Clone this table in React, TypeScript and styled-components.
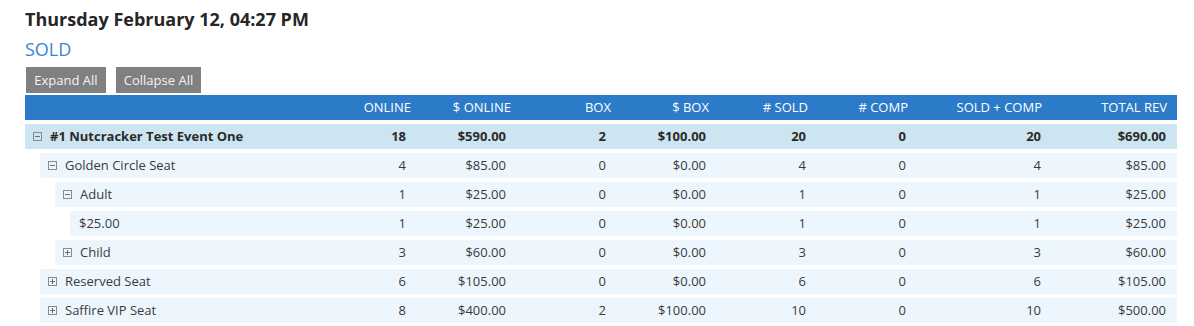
import React from "react";
import styled, { createGlobalStyle } from "styled-components";

const GlobalStyle = createGlobalStyle`
  html, body { margin: 0; padding: 0; background: #ffffff; }
  body { font-family: "Open Sans", "Liberation Sans", sans-serif; color: #333333; }
`;

const Page = styled.div`
  width: 1152px;
  padding: 7px 0 0 25px;
`;

const Title = styled.h2`
  margin: 0;
  font-size: 18px;
  line-height: 24px;
  font-weight: 700;
  color: #262626;
`;

const SectionLabel = styled.div`
  margin-top: 6px;
  font-size: 18px;
  line-height: 24px;
  color: #3a84d7;
`;

const Toolbar = styled.div`
  display: flex;
  gap: 10px;
  margin-top: 6px;
  padding-left: 1px;
`;

const Button = styled.button<{ $w: number }>`
  width: ${(p) => p.$w}px;
  height: 26px;
  padding: 0;
  border: none;
  border-radius: 0;
  background: #808080;
  color: #f4f4f4;
  font-family: "Open Sans", "Liberation Sans", sans-serif;
  font-size: 13px;
  line-height: 26px;
  text-align: center;
  cursor: pointer;
`;

const Table = styled.div`
  margin-top: 2px;
  display: flex;
  flex-direction: column;
  gap: 4px;
`;

const COLS = "1fr 100px 100px 100px 100px 100px 100px 135px 125px";

const HeaderRow = styled.div`
  display: grid;
  grid-template-columns: ${COLS};
  height: 25px;
  padding-right: 1px;
  background: #2b7bc9;
  color: #ffffff;
  font-size: 13px;
  line-height: 25px;
`;

const HeaderCell = styled.div<{ $pad: number }>`
  text-align: right;
  padding-right: ${(p) => p.$pad}px;
  white-space: nowrap;
`;

const Row = styled.div<{ $level: number; $top: boolean }>`
  display: grid;
  grid-template-columns: ${COLS};
  height: 25px;
  margin-left: ${(p) => p.$level * 15}px;
  padding-right: 1px;
  background: ${(p) => (p.$top ? "#cde5f1" : "#eef6fd")};
  font-size: 13px;
  line-height: 25px;
  font-weight: ${(p) => (p.$top ? 700 : 400)};
  color: ${(p) => (p.$top ? "#2a2a2a" : "#3a3a3a")};
`;

const LabelCell = styled.div<{ $leaf: boolean }>`
  display: flex;
  align-items: center;
  gap: 8px;
  padding-left: ${(p) => (p.$leaf ? 9 : 8)}px;
  white-space: nowrap;
  overflow: hidden;
`;

const ValueCell = styled.div`
  text-align: right;
  padding-right: 10px;
  white-space: nowrap;
`;

const Toggle = styled.svg`
  flex: none;
  width: 9px;
  height: 9px;
  display: block;
`;

const ToggleIcon = ({ open }: { open: boolean }) => (
  <Toggle viewBox="0 0 9 9">
    <rect x="0.5" y="0.5" width="8" height="8" fill="none" stroke="#8c8c8c" strokeWidth="1" />
    <line x1="2" y1="4.5" x2="7" y2="4.5" stroke="#6e6e6e" strokeWidth="1" />
    {!open && <line x1="4.5" y1="2" x2="4.5" y2="7" stroke="#6e6e6e" strokeWidth="1" />}
  </Toggle>
);

const headers = [
  { label: "ONLINE", pad: 5 },
  { label: "$ ONLINE", pad: 5 },
  { label: "BOX", pad: 5 },
  { label: "$ BOX", pad: 7 },
  { label: "# SOLD", pad: 8 },
  { label: "# COMP", pad: 8 },
  { label: "SOLD + COMP", pad: 9 },
  { label: "TOTAL REV", pad: 9 },
];

type RowData = {
  label: string;
  level: number;
  toggle: "open" | "closed" | null;
  values: string[];
};

const rows: RowData[] = [
  { label: "#1 Nutcracker Test Event One", level: 0, toggle: "open", values: ["18", "$590.00", "2", "$100.00", "20", "0", "20", "$690.00"] },
  { label: "Golden Circle Seat", level: 1, toggle: "open", values: ["4", "$85.00", "0", "$0.00", "4", "0", "4", "$85.00"] },
  { label: "Adult", level: 2, toggle: "open", values: ["1", "$25.00", "0", "$0.00", "1", "0", "1", "$25.00"] },
  { label: "$25.00", level: 3, toggle: null, values: ["1", "$25.00", "0", "$0.00", "1", "0", "1", "$25.00"] },
  { label: "Child", level: 2, toggle: "closed", values: ["3", "$60.00", "0", "$0.00", "3", "0", "3", "$60.00"] },
  { label: "Reserved Seat", level: 1, toggle: "closed", values: ["6", "$105.00", "0", "$0.00", "6", "0", "6", "$105.00"] },
  { label: "Saffire VIP Seat", level: 1, toggle: "closed", values: ["8", "$400.00", "2", "$100.00", "10", "0", "10", "$500.00"] },
];

export default function App() {
  return (
    <>
      <GlobalStyle />
      <Page>
        <Title>Thursday February 12, 04:27 PM</Title>
        <SectionLabel>SOLD</SectionLabel>
        <Toolbar>
          <Button $w={80}>Expand All</Button>
          <Button $w={85}>Collapse All</Button>
        </Toolbar>
        <Table>
          <HeaderRow>
            <div />
            {headers.map((h) => (
              <HeaderCell key={h.label} $pad={h.pad}>
                {h.label}
              </HeaderCell>
            ))}
          </HeaderRow>
          {rows.map((r, i) => (
            <Row key={i} $level={r.level} $top={r.level === 0}>
              <LabelCell $leaf={r.toggle === null}>
                {r.toggle && <ToggleIcon open={r.toggle === "open"} />}
                <span>{r.label}</span>
              </LabelCell>
              {r.values.map((v, j) => (
                <ValueCell key={j}>{v}</ValueCell>
              ))}
            </Row>
          ))}
        </Table>
      </Page>
    </>
  );
}
